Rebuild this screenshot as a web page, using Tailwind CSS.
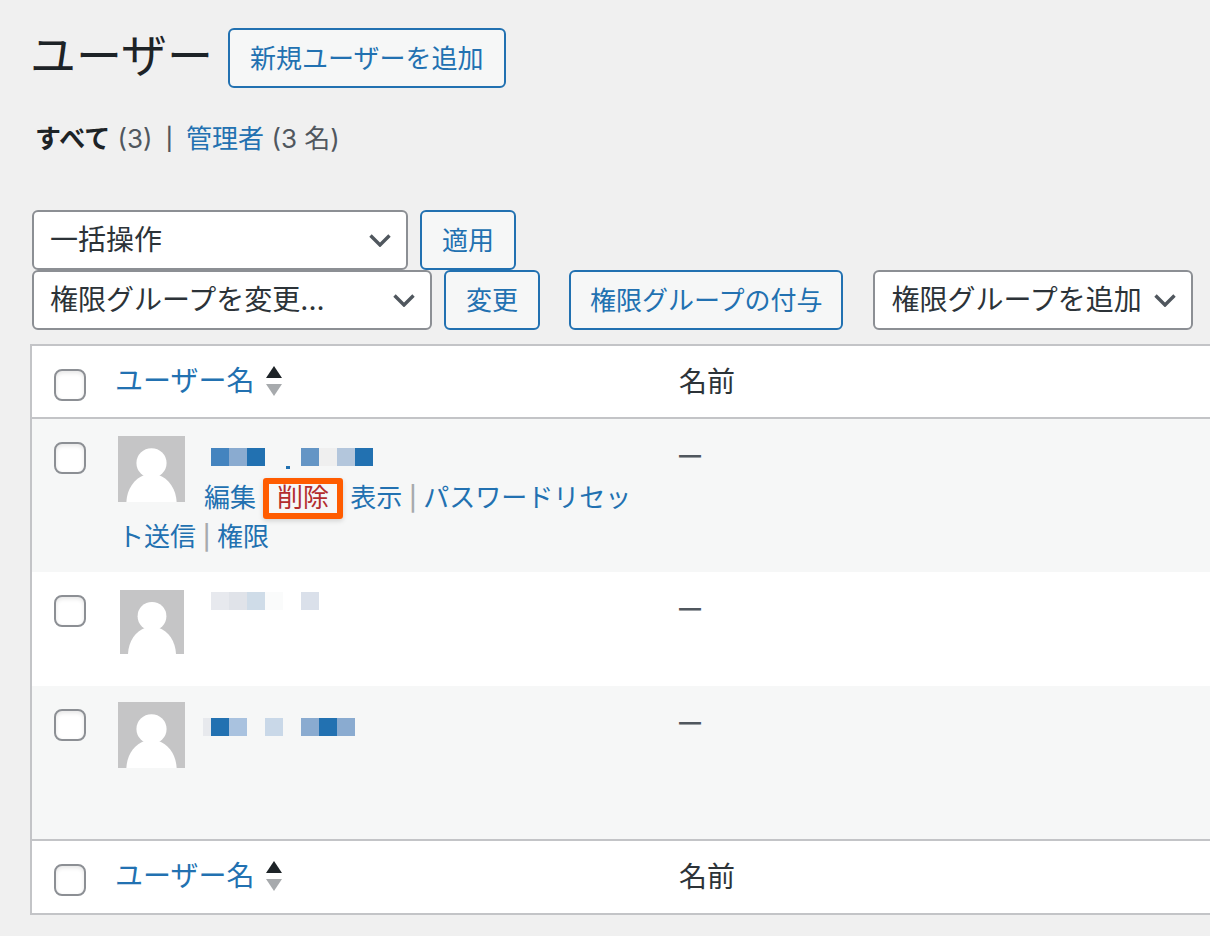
<!DOCTYPE html>
<html lang="ja">
<head>
<meta charset="utf-8">
<meta name="viewport" content="width=device-width, initial-scale=1">
<title>ユーザー</title>
<script src="https://cdn.jsdelivr.net/npm/@tailwindcss/browser@4"></script>
</head>
<body class="min-h-screen overflow-x-hidden bg-[#f0f0f0] font-[Inter,'Noto_Sans_CJK_JP',sans-serif] text-[#50575e]">
<svg class="hidden" aria-hidden="true">
  <symbol id="avatar" viewBox="0 0 64 64" preserveAspectRatio="none">
    <rect width="64" height="64" fill="#c5c5c6"/>
    <circle cx="32" cy="26.3" r="14.4" fill="#fff"/>
    <path d="M8 64C8.500 52 15 41 26 37.500H38C49 41 55.500 52 56 64Z" fill="#fff"/>
  </symbol>
  <symbol id="chevron" viewBox="0 0 22 13">
    <path d="M1.500 1.500L11 11L20.500 1.500" fill="none" stroke="#50575e" stroke-width="3.400"/>
  </symbol>
  <symbol id="sort" viewBox="0 0 16 30">
    <path d="M8 0L16 12H0Z" fill="#1d2327"/>
    <path d="M0 18H16L8 30Z" fill="#a7aaad"/>
  </symbol>
</svg>
<main class="pt-7 pl-[30px]">
  <header class="flex h-[60px] items-center gap-[15px]">
    <h1 class="pb-1.5 text-[46px] leading-none text-[#1d2327]">ユーザー</h1>
    <button class="h-[60px] rounded-md border-2 border-[#2271b1] bg-[#f6f7f7] px-5 text-[26px] whitespace-nowrap text-[#2271b1]">新規ユーザーを追加</button>
  </header>

  <nav class="mt-[33px] flex h-9 items-center pl-[5px] text-[26px] leading-9 whitespace-nowrap">
    <span><a href="#" class="font-bold text-[#1d2327]">すべて</a> (3)</span>
    <span class="mx-[13px] text-[22px] font-medium">|</span>
    <span><a href="#" class="text-[#2271b1]">管理者</a> (3 名)</span>
  </nav>

  <form class="mt-[53px] pl-0.5 text-[26px] whitespace-nowrap">
    <div class="flex gap-3">
      <div class="relative w-[376px] shrink-0">
        <select aria-label="一括操作" class="h-[60px] w-full appearance-none rounded-md border-2 border-[#8c8f94] bg-white px-4 text-[28px] text-[#2c3338]"><option>一括操作</option></select>
        <svg class="pointer-events-none absolute top-6 right-[17px] h-[13px] w-[22px]"><use href="#chevron"/></svg>
      </div>
      <button type="button" class="h-[60px] rounded-md border-2 border-[#2271b1] bg-[#f6f7f7] px-5 text-[#2271b1]">適用</button>
    </div>
    <div class="flex">
      <div class="relative w-[400px] shrink-0">
        <select aria-label="権限グループを変更" class="h-[60px] w-full appearance-none rounded-md border-2 border-[#8c8f94] bg-white px-4 text-[28px] text-[#2c3338]"><option>権限グループを変更...</option></select>
        <svg class="pointer-events-none absolute top-6 right-[17px] h-[13px] w-[22px]"><use href="#chevron"/></svg>
      </div>
      <button type="button" class="ml-3 h-[60px] rounded-md border-2 border-[#2271b1] bg-[#f6f7f7] px-5 text-[#2271b1]">変更</button>
      <button type="button" class="ml-[29px] h-[60px] rounded-md border-2 border-[#2271b1] bg-[#f6f7f7] px-[19px] text-[#2271b1]">権限グループの付与</button>
      <div class="relative ml-[30px] w-[320px] shrink-0">
        <select aria-label="権限グループを追加" class="h-[60px] w-full appearance-none rounded-md border-2 border-[#8c8f94] bg-white px-4 text-[28px] text-[#2c3338]"><option>権限グループを追加</option></select>
        <svg class="pointer-events-none absolute top-6 right-[17px] h-[13px] w-[22px]"><use href="#chevron"/></svg>
      </div>
    </div>
  </form>

  <div class="mt-3.5 border-y-2 border-l-2 border-[#c3c4c7] bg-white">
  <table class="w-full table-fixed border-collapse text-left text-[28px] text-[#2c3338]">
    <colgroup><col class="w-[70px]"><col class="w-[561px]"><col></colgroup>
    <thead>
      <tr class="h-[72px] align-top">
        <td class="pt-[23px] pl-[22px]"><input type="checkbox" aria-label="すべて選択" class="block size-8 appearance-none rounded-lg border-2 border-[#8c8f94] bg-white shadow-[inset_0_2px_4px_rgba(0,0,0,0.1)]"></td>
        <th scope="col" class="pt-4 pl-[13px] font-normal"><a href="#" class="flex items-center gap-3 leading-[38px] text-[#2271b1]">ユーザー名<svg class="h-[30px] w-4"><use href="#sort"/></svg></a></th>
        <th scope="col" class="pt-4 pl-4 leading-10 font-normal">名前</th>
      </tr>
    </thead>
    <tbody>
      <tr class="h-[154px] border-t-2 border-[#c3c4c7] bg-[#f6f7f7] align-top">
        <td class="pt-[23px] pl-[22px]"><input type="checkbox" aria-label="ユーザー1を選択" class="block size-8 appearance-none rounded-lg border-2 border-[#8c8f94] bg-white shadow-[inset_0_2px_4px_rgba(0,0,0,0.1)]"></td>
        <td class="pt-[17px] pr-4 pl-4">
          <svg class="float-left mr-[19px] h-[66px] w-[67px]"><use href="#avatar"/></svg>
          <a href="#" aria-label="ユーザー1" class="flex h-[42px] pt-3">
            <svg class="h-[21px] w-[170px]" viewBox="0 0 170 21">
              <path fill="#4484bf" d="M7 0h18v18H7z"/><path fill="#8aabd0" d="M25 0h18v18H25z"/><path fill="#2271b1" d="M43 0h18v18H43zM151 0h18v18h-18zM82 18h4v3h-4z"/>
              <path fill="#6495c5" d="M97 0h18v18H97z"/><path fill="#efefef" d="M115 0h18v18h-18z"/><path fill="#b3c6dc" d="M133 0h18v18h-18z"/>
            </svg>
          </a>
          <div class="text-[26px] leading-[39px] text-[#a7aaad]"><a href="#" class="text-[#2271b1]">編集</a><span class="text-[24px] leading-none font-medium"> | </span><span class="relative"><a href="#" class="text-[#b32d2e]">削除</a><span class="pointer-events-none absolute -inset-x-3.5 -top-1 -bottom-1.5 rounded-[3px] border-6 border-[#ff5c00] shadow-[0_2px_5px_rgba(0,0,0,0.15)]"></span></span><span class="text-[24px] leading-none font-medium"> | </span><a href="#" class="text-[#2271b1]">表示</a><span class="text-[24px] leading-none font-medium"> | </span><a href="#" class="text-[#2271b1]">パスワードリセット送信</a><span class="text-[24px] leading-none font-medium"> | </span><a href="#" class="text-[#2271b1]">権限</a></div>
        </td>
        <td class="pt-4 pl-4 text-[22px] leading-10 font-bold text-[#50575e]">—</td>
      </tr>
      <tr class="h-[114px] align-top">
        <td class="pt-[23px] pl-[22px]"><input type="checkbox" aria-label="ユーザー2を選択" class="block size-8 appearance-none rounded-lg border-2 border-[#8c8f94] bg-white shadow-[inset_0_2px_4px_rgba(0,0,0,0.1)]"></td>
        <td class="pt-[18px] pr-4 pl-[18px]">
          <svg class="float-left mr-5 size-16"><use href="#avatar"/></svg>
          <a href="#" aria-label="ユーザー2" class="flex pt-0.5">
            <svg class="h-5 w-[170px]" viewBox="0 0 170 20">
              <path fill="#e7e9ee" d="M7 0h18v18H7z"/><path fill="#e0e3e9" d="M25 0h18v18H25z"/><path fill="#cfdce8" d="M43 0h18v18H43z"/><path fill="#fafbfb" d="M61 0h18v18H61z"/><path fill="#dae0ea" d="M97 0h18v18H97z"/>
            </svg>
          </a>
        </td>
        <td class="pt-4 pl-4 text-[22px] leading-10 font-bold text-[#50575e]">—</td>
      </tr>
      <tr class="h-[154px] bg-[#f6f7f7] align-top">
        <td class="pt-[23px] pl-[22px]"><input type="checkbox" aria-label="ユーザー3を選択" class="block size-8 appearance-none rounded-lg border-2 border-[#8c8f94] bg-white shadow-[inset_0_2px_4px_rgba(0,0,0,0.1)]"></td>
        <td class="pt-4 pr-4 pl-4">
          <svg class="float-left mr-[18px] h-[66px] w-[67px]"><use href="#avatar"/></svg>
          <a href="#" aria-label="ユーザー3" class="flex pt-4">
            <svg class="h-5 w-[170px]" viewBox="0 0 170 20">
              <path fill="#e7e9ed" d="M0 0h8v18H0z"/><path fill="#2271b1" d="M8 0h18v18H8zM116 0h18v18h-18z"/><path fill="#a9c2df" d="M26 0h18v18H26z"/><path fill="#c9d8e8" d="M62 0h18v18H62z"/><path fill="#8aabd0" d="M98 0h18v18H98zM134 0h18v18h-18z"/>
            </svg>
          </a>
        </td>
        <td class="pt-4 pl-4 text-[22px] leading-10 font-bold text-[#50575e]">—</td>
      </tr>
    </tbody>
    <tfoot>
      <tr class="h-[73px] border-t-2 border-[#c3c4c7] align-top">
        <td class="pt-[23px] pl-[22px]"><input type="checkbox" aria-label="すべて選択（下部）" class="block size-8 appearance-none rounded-lg border-2 border-[#8c8f94] bg-white shadow-[inset_0_2px_4px_rgba(0,0,0,0.1)]"></td>
        <th scope="col" class="pt-4 pl-[13px] font-normal"><a href="#" class="flex items-center gap-3 leading-[38px] text-[#2271b1]">ユーザー名<svg class="h-[30px] w-4"><use href="#sort"/></svg></a></th>
        <th scope="col" class="pt-4 pl-4 leading-10 font-normal">名前</th>
      </tr>
    </tfoot>
  </table>
  </div>
</main>
</body>
</html>
